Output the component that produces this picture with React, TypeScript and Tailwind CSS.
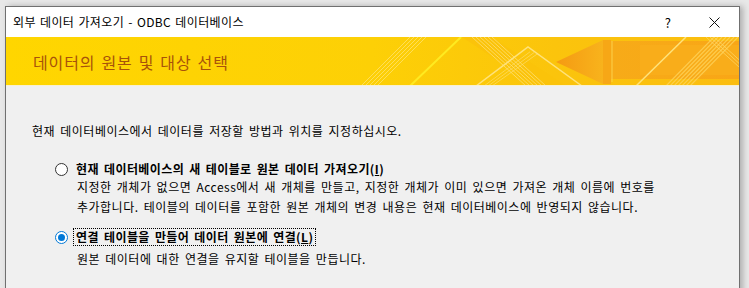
import React from 'react';

const font = { fontFamily: '"Noto Sans CJK KR", "Noto Sans", sans-serif' };

function BannerArt() {
    return (
        <svg className="absolute inset-0 h-full w-full" viewBox="0 0 733 49" preserveAspectRatio="none">
            <defs>
                <linearGradient id="bg" x1="0" y1="0" x2="1" y2="0">
                    <stop offset="0" stopColor="#ffd600" />
                    <stop offset="0.5" stopColor="#fdd006" />
                    <stop offset="0.75" stopColor="#fbc40c" />
                    <stop offset="1" stopColor="#fbbd10" />
                </linearGradient>
                <linearGradient id="arrow" x1="0" y1="0" x2="1" y2="0">
                    <stop offset="0" stopColor="#f59a12" />
                    <stop offset="1" stopColor="#f8b31c" />
                </linearGradient>
                <linearGradient id="box" x1="0" y1="0" x2="1" y2="0">
                    <stop offset="0" stopColor="#f7ab18" />
                    <stop offset="1" stopColor="#f9a616" />
                </linearGradient>
            </defs>
            <rect width="733" height="49" fill="url(#bg)" />
            {/* faint left stripes */}
            {[0, 4, 8, 12, 16].map((o) => (
                <line key={'a' + o} x1={355 + o} y1="49" x2={404 + o} y2="0" stroke="#ffe67a" strokeWidth="1" opacity="0.7" />
            ))}
            <line x1="404" y1="49" x2="455" y2="0" stroke="#ffea20" strokeWidth="2" />
            {/* back-slash band */}
            <polygon points="456,0 486,0 560,49 530,49" fill="#fbc30a" />
            {[0, 4, 8, 12, 16, 20].map((o) => (
                <line key={'b' + o} x1={466 + o} y1="0" x2={520 + o} y2="49" stroke="#ffe27a" strokeWidth="1" opacity="0.75" />
            ))}
            {/* chevron */}
            <polyline points="470,49 522,10 576,49" fill="none" stroke="#ffe27a" strokeWidth="1.5" />
            {[4, 8, 12].map((o) => (
                <line key={'c' + o} x1={474 + o} y1="49" x2={520 + o} y2={14 + o * 0.2} stroke="#ffe27a" strokeWidth="1" opacity="0.6" />
            ))}
            {/* arrow */}
            <rect x="604" y="4" width="129" height="38" fill="url(#box)" />
            <rect x="634" y="8" width="99" height="30" fill="#f9ad1a" />
            <polygon points="550,25 597,3 597,47" fill="url(#arrow)" />
            <rect x="597" y="3" width="8" height="44" fill="#f7a716" />
            <line x1="606" y1="4" x2="606" y2="45" stroke="#fcd04a" strokeWidth="1" />
            {/* right stripes */}
            <line x1="630" y1="49" x2="680" y2="0" stroke="#ffe27a" strokeWidth="1.5" />
            {[0, 4, 8, 12, 16, 20, 24].map((o) => (
                <line key={'d' + o} x1={660 + o} y1="49" x2={708 + o} y2="0" stroke="#ffd45a" strokeWidth="1.2" opacity="0.8" />
            ))}
            {[0, 4, 8].map((o) => (
                <line key={'e' + o} x1={700 + o} y1="0" x2={733 + o} y2="30" stroke="#ffd96a" strokeWidth="1" opacity="0.7" />
            ))}
            <rect y="48" width="733" height="1" fill="#f8f0d0" />
        </svg>
    );
}

function Radio({ checked }: { checked?: boolean }) {
    return (
        <span
            className={`flex h-[13px] w-[13px] shrink-0 items-center justify-center rounded-full border bg-white ${checked ? 'border-[#0078d7]' : 'border-[#333333]'}`}
        >
            {checked && <span className="h-[7px] w-[7px] rounded-full bg-[#0078d7]" />}
        </span>
    );
}

export default function App() {
    return (
        <div className="h-[288px] w-[749px] overflow-hidden bg-[#e8e8e8] pl-[5px] pt-[6px] text-black" style={font}>
            <div className="flex h-[290px] w-[735px] flex-col border border-[#707070] shadow-[3px_0_6px_rgba(0,0,0,0.25)]">
                {/* Title bar */}
                <div className="flex h-[30px] items-center bg-white pl-[7px] text-[12px]">
                    <span className="leading-none tracking-[0.4px] [word-spacing:1px]">외부 데이터 가져오기 - ODBC 데이터베이스</span>
                    <span className="ml-auto mr-[38px] text-[13px] leading-none">?</span>
                    <svg width="11" height="11" viewBox="0 0 11 11" className="mr-[19px]">
                        <path d="M0.5 0.5 L10.5 10.5 M10.5 0.5 L0.5 10.5" stroke="#111" strokeWidth="1" />
                    </svg>
                </div>

                {/* Banner */}
                <div className="relative flex h-[49px] items-center bg-[#ffd600] pl-[27px]">
                    <BannerArt />
                    <span className="relative text-[16px] leading-none tracking-[0.9px] [word-spacing:1.5px] text-[#a8520a]">
                        데이터의 원본 및 대상 선택
                    </span>
                </div>

                {/* Body */}
                <div className="flex-1 bg-[#f0f0f0] pl-[26px] pt-[37px] text-[12px] tracking-[0.5px] [word-spacing:2px]">
                    <p className="leading-[16px]">현재 데이터베이스에서 데이터를 저장할 방법과 위치를 지정하십시오.</p>

                    <div className="ml-[23px] mt-[21px]">
                        <div className="flex h-[18px] items-center gap-[8px]">
                            <Radio />
                            <span className="font-bold leading-none tracking-[0.4px]">
                                현재 데이터베이스의 새 테이블로 원본 데이터 가져오기(<span className="underline">I</span>)
                            </span>
                        </div>
                        <p className="ml-[22px] mt-[-1px] leading-[20px]">
                            지정한 개체가 없으면 Access에서 새 개체를 만들고, 지정한 개체가 이미 있으면 가져온 개체 이름에 번호를
                            <br />
                            추가합니다. 테이블의 데이터를 포함한 원본 개체의 변경 내용은 현재 데이터베이스에 반영되지 않습니다.
                        </p>

                        <div className="mt-[11px] flex h-[18px] items-center gap-[5px]">
                            <Radio checked />
                            <span className="flex h-[18px] items-center border border-dotted border-black px-[2px] font-bold leading-none tracking-[0.4px]">
                                연결 테이블을 만들어 데이터 원본에 연결(<span className="underline">L</span>)
                            </span>
                        </div>
                        <p className="ml-[22px] mt-[3px] leading-[20px]">원본 데이터에 대한 연결을 유지할 테이블을 만듭니다.</p>
                    </div>
                </div>
            </div>
        </div>
    );
}
